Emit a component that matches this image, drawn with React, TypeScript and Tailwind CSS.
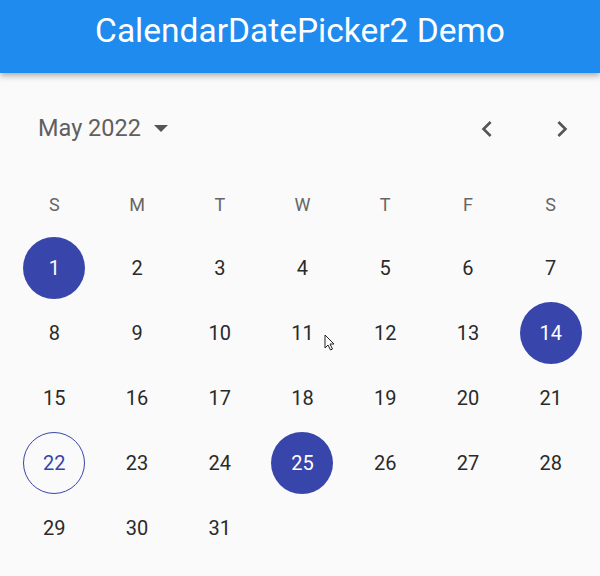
import React from "react";

const weekdays = ["S", "M", "T", "W", "T", "F", "S"];

// May 2022 starts on a Sunday
const days = Array.from({ length: 31 }, (_, i) => i + 1);
const selected = [1, 14, 25];
const today = 22;

const ChevronLeft = () => (
  <svg width="32" height="32" viewBox="0 0 24 24" fill="#555">
    <path d="M15.41 7.41 14 6l-6 6 6 6 1.41-1.41L10.83 12z" />
  </svg>
);

const ChevronRight = () => (
  <svg width="32" height="32" viewBox="0 0 24 24" fill="#555">
    <path d="M10 6 8.59 7.41 13.17 12l-4.58 4.59L10 18l6-6z" />
  </svg>
);

const DayCell = ({ day }: { day: number }) => {
  const isSelected = selected.includes(day);
  const isToday = day === today;

  let circle = "text-[#2a2a2a]";
  if (isSelected) circle = "bg-[#3846ab] text-white";
  else if (isToday) circle = "border-[1.5px] border-[#3846ab] text-[#3846ab]";

  return (
    <div className="flex h-[65px] items-center justify-center">
      <div
        className={`flex h-[62px] w-[62px] items-center justify-center rounded-full text-[20px] ${circle}`}
      >
        {day}
      </div>
    </div>
  );
};

export default function App() {
  return (
    <div
      className="relative h-[576px] w-[600px] overflow-hidden bg-[#fafafa]"
      style={{ fontFamily: "Roboto, 'Liberation Sans', sans-serif" }}
    >
      {/* App bar */}
      <header className="relative z-10 flex h-[73px] items-center justify-center bg-[#1f8bee] pb-[10px] shadow-[0_3px_6px_rgba(0,0,0,0.3)]">
        <h1 className="text-[33.5px] text-white">CalendarDatePicker2 Demo</h1>
      </header>

      {/* Month header */}
      <div className="flex h-[112px] items-center pl-[38px] pr-[22px]">
        <div className="flex items-center gap-[13px] text-[23.5px] text-[#5f5f5f]">
          <span>May 2022</span>
          <svg width="14" height="8" viewBox="0 0 14 8" fill="#555">
            <path d="M0 0h14L7 7z" />
          </svg>
        </div>
        <div className="ml-auto flex items-center gap-[43px]">
          <ChevronLeft />
          <ChevronRight />
        </div>
      </div>

      {/* Calendar grid */}
      <div className="ml-[13px] w-[579px]">
        <div className="grid grid-cols-7">
          {weekdays.map((d, i) => (
            <div
              key={i}
              className="flex h-[38px] items-center justify-center text-[18px] text-[#666]"
            >
              {d}
            </div>
          ))}
        </div>
        <div className="mt-[12px] grid grid-cols-7">
          {days.map((d) => (
            <DayCell key={d} day={d} />
          ))}
        </div>
      </div>

      {/* mouse pointer */}
      <svg
        className="absolute left-[324px] top-[334px]"
        width="12"
        height="18"
        viewBox="0 0 12 18"
      >
        <path
          d="M1 1v13l3-3 2.5 5 2-1-2.5-5H10z"
          fill="#fff"
          stroke="#222"
          strokeWidth="1"
        />
      </svg>
    </div>
  );
}
